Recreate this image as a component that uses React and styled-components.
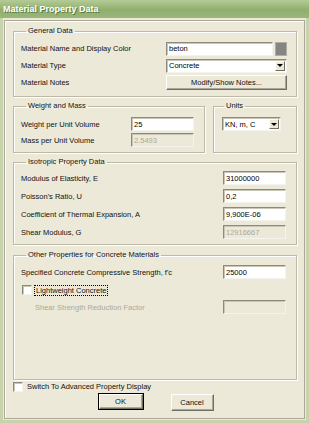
import React from "react";
import styled, { createGlobalStyle } from "styled-components";

const GlobalStyle = createGlobalStyle`
  html, body {
    margin: 0;
    padding: 0;
    background: #ece9d8;
  }
  body {
    font-family: "Liberation Sans", Arial, sans-serif;
    font-size: 7.5px;
    color: #111;
  }
`;

const Window = styled.div`
  width: 309px;
  height: 423px;
  display: flex;
  flex-direction: column;
  background: #ece9d8;
`;

const TitleBar = styled.div`
  height: 18px;
  flex-shrink: 0;
  display: flex;
  align-items: center;
  padding-left: 3px;
  background: linear-gradient(#b4cb96, #90ae6e 55%, #9ab779);
  color: #fff;
  font-weight: bold;
  font-size: 9px;
  text-shadow: 1px 1px 0 #5d7b40;
`;

const Frame = styled.div`
  flex: 1;
  display: flex;
  border: 3px solid #c7d4ab;
  border-top: 0;
  padding: 2px 1px 1px 1px;
`;

const Panel = styled.div`
  flex: 1;
  display: flex;
  flex-direction: column;
  border: 1px solid #aca899;
  box-shadow: inset 1px 1px 0 #fff;
  padding: 5px 7px 0 8px;
`;

const Group = styled.fieldset`
  margin: 0;
  margin-top: ${(p) => p.$top || 0}px;
  padding: ${(p) => p.$pad || "4px 10px 5px 7px"};
  border: 1px solid #bcb9a8;
  box-shadow: 1px 1px 0 #fff, inset 1px 1px 0 #fff;
  min-width: 0;
  flex: ${(p) => p.$flex || "none"};
  height: ${(p) => (p.$height ? `${p.$height}px` : "auto")};
  box-sizing: border-box;
`;

const Legend = styled.legend`
  padding: 0 2px;
  margin-left: ${(p) => p.$left ?? 5}px;
  line-height: 10px;
  font-size: 7.5px;
`;

const SplitRow = styled.div`
  display: flex;
  gap: 8px;
  margin-top: 4px;
`;

const FieldRow = styled.div`
  display: flex;
  align-items: center;
  justify-content: space-between;
  height: ${(p) => p.$h || 17}px;
`;

const Label = styled.span`
  color: ${(p) => (p.$disabled ? "#aca899" : "inherit")};
  padding-left: ${(p) => p.$indent || 0}px;
  white-space: nowrap;
`;

const Controls = styled.div`
  display: flex;
  align-items: center;
  gap: 2px;
`;

const TextBox = styled.div`
  box-sizing: border-box;
  width: ${(p) => p.$w}px;
  height: 14px;
  display: flex;
  align-items: center;
  padding-left: 2px;
  background: ${(p) => (p.$disabled ? "#ece9d8" : "#fff")};
  color: ${(p) => (p.$disabled ? "#aca899" : "#000")};
  border: 1px solid;
  border-color: #8d8a7c #f4f3ee #f4f3ee #8d8a7c;
  box-shadow: inset 1px 1px 0 #c9c6b7;
`;

const Swatch = styled.div`
  width: 10px;
  height: 12px;
  background: #858585;
  border: 1px solid #b0ada0;
`;

const SelectBox = styled(TextBox)`
  justify-content: space-between;
  padding-right: 1px;
`;

const DropButton = styled.div`
  width: 10px;
  height: 10px;
  box-sizing: border-box;
  background: #ece9d8;
  border: 1px solid;
  border-color: #fff #716f64 #716f64 #fff;
  display: flex;
  align-items: center;
  justify-content: center;
  &::after {
    content: "";
    border-left: 3px solid transparent;
    border-right: 3px solid transparent;
    border-top: 3px solid #000;
  }
`;

const Button = styled.div`
  box-sizing: border-box;
  width: ${(p) => p.$w}px;
  height: ${(p) => p.$h || 15}px;
  display: flex;
  align-items: center;
  justify-content: center;
  background: #ece9d8;
  border: 1px solid;
  border-color: #fff #716f64 #716f64 #fff;
  box-shadow: inset -1px -1px 0 #aca899;
  outline: ${(p) => (p.$default ? "1px solid #000" : "none")};
`;

const CheckLine = styled.div`
  display: flex;
  align-items: center;
  gap: ${(p) => p.$gap || 3}px;
  height: ${(p) => p.$h || 17}px;
  padding-left: ${(p) => p.$indent || 0}px;
`;

const CheckBox = styled.div`
  width: 10px;
  height: 10px;
  box-sizing: border-box;
  background: #fff;
  border: 1px solid;
  border-color: #8d8a7c #f4f3ee #f4f3ee #8d8a7c;
  box-shadow: inset 1px 1px 0 #c9c6b7;
`;

const Focused = styled.span`
  outline: 1px dotted #000;
  outline-offset: 0;
  padding: 0 1px;
`;

const Spacer = styled.div`
  flex: 1;
`;

const ButtonRow = styled.div`
  display: flex;
  justify-content: center;
  gap: 28px;
  padding-left: 2px;
  margin-top: 1px;
`;

const Select = ({ w, value }) => (
  <SelectBox $w={w}>
    <span>{value}</span>
    <DropButton />
  </SelectBox>
);

export default function App() {
  return (
    <>
      <GlobalStyle />
      <Window>
        <TitleBar>Material Property Data</TitleBar>
        <Frame>
          <Panel>
            <Group $pad="4px 9px 5px 7px">
              <Legend>General Data</Legend>
              <FieldRow $h={17}>
                <Label>Material Name and Display Color</Label>
                <Controls>
                  <TextBox $w={107}>beton</TextBox>
                  <Swatch />
                </Controls>
              </FieldRow>
              <FieldRow $h={17}>
                <Label>Material Type</Label>
                <Select w={121} value="Concrete" />
              </FieldRow>
              <FieldRow $h={17}>
                <Label>Material Notes</Label>
                <Button $w={121} $h={15}>Modify/Show Notes...</Button>
              </FieldRow>
            </Group>

            <SplitRow>
              <Group $flex="0 0 192px" $pad="5px 10px 4px 7px">
                <Legend>Weight and Mass</Legend>
                <FieldRow $h={16}>
                  <Label>Weight per Unit Volume</Label>
                  <TextBox $w={63}>25</TextBox>
                </FieldRow>
                <FieldRow $h={16}>
                  <Label>Mass per Unit Volume</Label>
                  <TextBox $w={63} $disabled>2.5493</TextBox>
                </FieldRow>
              </Group>
              <Group $flex="1" $pad="5px 8px 4px 8px">
                <Legend $left={2}>Units</Legend>
                <FieldRow $h={16}>
                  <Select w={59} value="KN, m, C" />
                </FieldRow>
              </Group>
            </SplitRow>

            <Group $top={4} $pad="2px 10px 3px 7px">
              <Legend>Isotropic Property Data</Legend>
              <FieldRow $h={18}>
                <Label>Modulus of Elasticity,  E</Label>
                <TextBox $w={63}>31000000</TextBox>
              </FieldRow>
              <FieldRow $h={18}>
                <Label>Poisson's Ratio,  U</Label>
                <TextBox $w={63}>0,2</TextBox>
              </FieldRow>
              <FieldRow $h={18}>
                <Label>Coefficient of Thermal Expansion,  A</Label>
                <TextBox $w={63}>9,900E-06</TextBox>
              </FieldRow>
              <FieldRow $h={18}>
                <Label>Shear Modulus,  G</Label>
                <TextBox $w={63} $disabled>12916667</TextBox>
              </FieldRow>
            </Group>

            <Group $top={5} $height={130} $pad="3px 10px 3px 7px">
              <Legend>Other Properties for Concrete Materials</Legend>
              <FieldRow $h={18}>
                <Label>Specified Concrete Compressive Strength, f'c</Label>
                <TextBox $w={63}>25000</TextBox>
              </FieldRow>
              <CheckLine $h={18} $indent={1}>
                <CheckBox />
                <Focused>Lightweight Concrete</Focused>
              </CheckLine>
              <FieldRow $h={16}>
                <Label $disabled $indent={14}>Shear Strength Reduction Factor</Label>
                <TextBox $w={63} $disabled />
              </FieldRow>
            </Group>

            <CheckLine $h={13} $gap={4} $indent={0}>
              <CheckBox />
              <Label>Switch To Advanced Property Display</Label>
            </CheckLine>
            <ButtonRow>
              <Button $w={44} $h={15} $default>OK</Button>
              <Button $w={43} $h={17}>Cancel</Button>
            </ButtonRow>
            <Spacer />
          </Panel>
        </Frame>
      </Window>
    </>
  );
}
